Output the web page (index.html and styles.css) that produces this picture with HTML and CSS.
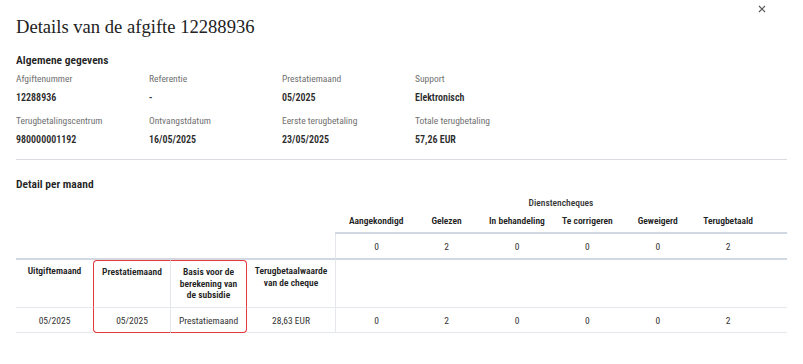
FILE: index.html
```html
<!DOCTYPE html>
<html lang="nl">
  <head>
    <meta charset="UTF-8" />
    <meta name="viewport" content="width=device-width, initial-scale=1.0" />
    <title>Details van de afgifte</title>
    <link rel="stylesheet" href="styles.css">
  </head>
  <body>
    <div class="dialog">
      <div class="dialog-head">
        <h1>Details van de afgifte 12288936</h1>
        <button class="close-btn" aria-label="Sluiten">
          <svg width="8" height="8" viewBox="0 0 8 8"><path d="M1 1L7 7M7 1L1 7" stroke="#555" stroke-width="1.1" fill="none"/></svg>
        </button>
      </div>

      <!-- Algemene gegevens -->
      <h2>Algemene gegevens</h2>
      <div class="info-grid">
        <div class="info"><span class="label">Afgiftenummer</span><span class="value">12288936</span></div>
        <div class="info"><span class="label">Referentie</span><span class="value">-</span></div>
        <div class="info"><span class="label">Prestatiemaand</span><span class="value">05/2025</span></div>
        <div class="info"><span class="label">Support</span><span class="value">Elektronisch</span></div>
        <div class="info"><span class="label">Terugbetalingscentrum</span><span class="value">980000001192</span></div>
        <div class="info"><span class="label">Ontvangstdatum</span><span class="value">16/05/2025</span></div>
        <div class="info"><span class="label">Eerste terugbetaling</span><span class="value">23/05/2025</span></div>
        <div class="info"><span class="label">Totale terugbetaling</span><span class="value">57,26 EUR</span></div>
      </div>

      <hr class="divider">

      <!-- Detail per maand -->
      <h2 class="second">Detail per maand</h2>
      <table class="month-table">
        <colgroup>
          <col class="c-left"><col class="c-left"><col class="c-left"><col class="c-value">
          <col class="c-cheque"><col class="c-cheque"><col class="c-cheque"><col class="c-cheque"><col class="c-cheque"><col class="c-cheque">
          <col>
        </colgroup>
        <tr class="row-group">
          <td colspan="4" rowspan="3" class="blank"></td>
          <th colspan="7">Dienstencheques</th>
        </tr>
        <tr class="row-sub">
          <th>Aangekondigd</th>
          <th>Gelezen</th>
          <th>In behandeling</th>
          <th>Te corrigeren</th>
          <th>Geweigerd</th>
          <th>Terugbetaald</th>
          <th></th>
        </tr>
        <tr class="row-count">
          <td class="sep num">0</td><td class="num">2</td><td class="num">0</td><td class="num">0</td><td class="num">0</td><td class="num">2</td><td></td>
        </tr>
        <tr class="row-head">
          <th>Uitgiftemaand</th>
          <th class="hl-left hl-top">Prestatiemaand</th>
          <th class="hl-right hl-top vline basis">Basis voor de berekening van de subsidie</th>
          <th>Terugbetaalwaarde van de cheque</th>
          <td colspan="7" class="sep"></td>
        </tr>
        <tr class="row-data">
          <td>05/2025</td>
          <td class="hl-left hl-bottom">05/2025</td>
          <td class="hl-right hl-bottom vline">Prestatiemaand</td>
          <td>28,63 EUR</td>
          <td class="sep num">0</td><td class="num">2</td><td class="num">0</td><td class="num">0</td><td class="num">0</td><td class="num">2</td><td></td>
        </tr>
      </table>
    </div>
  </body>
</html>
```

FILE: styles.css
```css
body {
  margin: 0;
  background: #fff;
  color: #333;
  font-family: Roboto, "Liberation Sans", sans-serif;
  font-stretch: 82%;
}
.dialog {
  padding: 0 16px;
}
.dialog-head {
  display: flex;
  justify-content: space-between;
  align-items: flex-start;
}
h1 {
  margin: 13px 0 0;
  font-family: "Liberation Serif", serif;
  font-stretch: normal;
  font-weight: normal;
  font-size: 18.6px;
  line-height: 28px;
  color: #222;
}
.close-btn {
  margin: 5px 21px 0 0;
  padding: 0;
  border: none;
  background: none;
  cursor: pointer;
  line-height: 0;
}
h2 {
  margin: 11px 0 4px;
  font-size: 11.5px;
  line-height: 16px;
  font-weight: 600;
  color: #222;
}
h2.second {
  margin-top: 16px;
  margin-bottom: 0;
}
.info-grid {
  display: grid;
  grid-template-columns: repeat(4, 133px);
  row-gap: 9px;
}
.info {
  display: flex;
  flex-direction: column;
  gap: 5px;
}
.label {
  font-size: 9.5px;
  line-height: 14px;
  color: #707070;
}
.value {
  font-size: 10px;
  line-height: 14px;
  font-weight: 600;
  color: #2b2b2b;
}
.divider {
  margin: 12px 0 0;
  border: none;
  border-top: 1px solid #d8dce1;
}

/* Table */
.month-table {
  width: 771px;
  border-collapse: separate;
  border-spacing: 0;
  table-layout: fixed;
  font-size: 9.5px;
  color: #333;
}
.c-left {
  width: 77px;
}
.c-value {
  width: 88px;
}
.c-cheque {
  width: 70.4px;
}
.month-table th,
.month-table td {
  padding: 0;
  text-align: center;
  vertical-align: middle;
}
.month-table th {
  font-weight: 600;
  color: #222;
}
.month-table .num,
.row-sub th {
  padding-left: 12px;
}
.row-group th {
  padding-top: 3px;
  line-height: 16px;
  font-weight: 500;
  color: #333;
}
.row-sub th {
  line-height: 16px;
  padding-top: 2px;
  padding-bottom: 3px;
  border-bottom: 2px solid #d1d8e2;
}
.month-table .blank {
  border-bottom: 2px solid #d1d8e2;
}
.row-count td {
  height: 24px;
  border-bottom: 2px solid #d1d8e2;
}
.row-head th,
.row-head td {
  vertical-align: top;
  line-height: 11.5px;
  padding: 5px 2px;
  height: 36px;
  border-bottom: 1px solid #e4e8ed;
}
.month-table .basis {
  padding-left: 7px;
  padding-right: 7px;
}
.row-data td {
  height: 24px;
  border-bottom: 1px solid #e4e8ed;
}
.month-table .sep {
  border-left: 1px solid #e4e8ed;
}
.month-table .vline {
  border-left: 1px solid #e4e8ed;
}

/* highlighted columns */
.month-table .hl-left {
  border-left: 1.5px solid #e5393d;
}
.month-table .hl-right {
  border-right: 1.5px solid #e5393d;
}
.month-table .hl-top {
  border-top: 1.5px solid #e5393d;
}
.month-table .hl-bottom {
  border-bottom: 1.5px solid #e5393d;
}
.hl-left.hl-top {
  border-top-left-radius: 4px;
}
.hl-right.hl-top {
  border-top-right-radius: 4px;
}
.hl-left.hl-bottom {
  border-bottom-left-radius: 4px;
}
.hl-right.hl-bottom {
  border-bottom-right-radius: 4px;
}
```
